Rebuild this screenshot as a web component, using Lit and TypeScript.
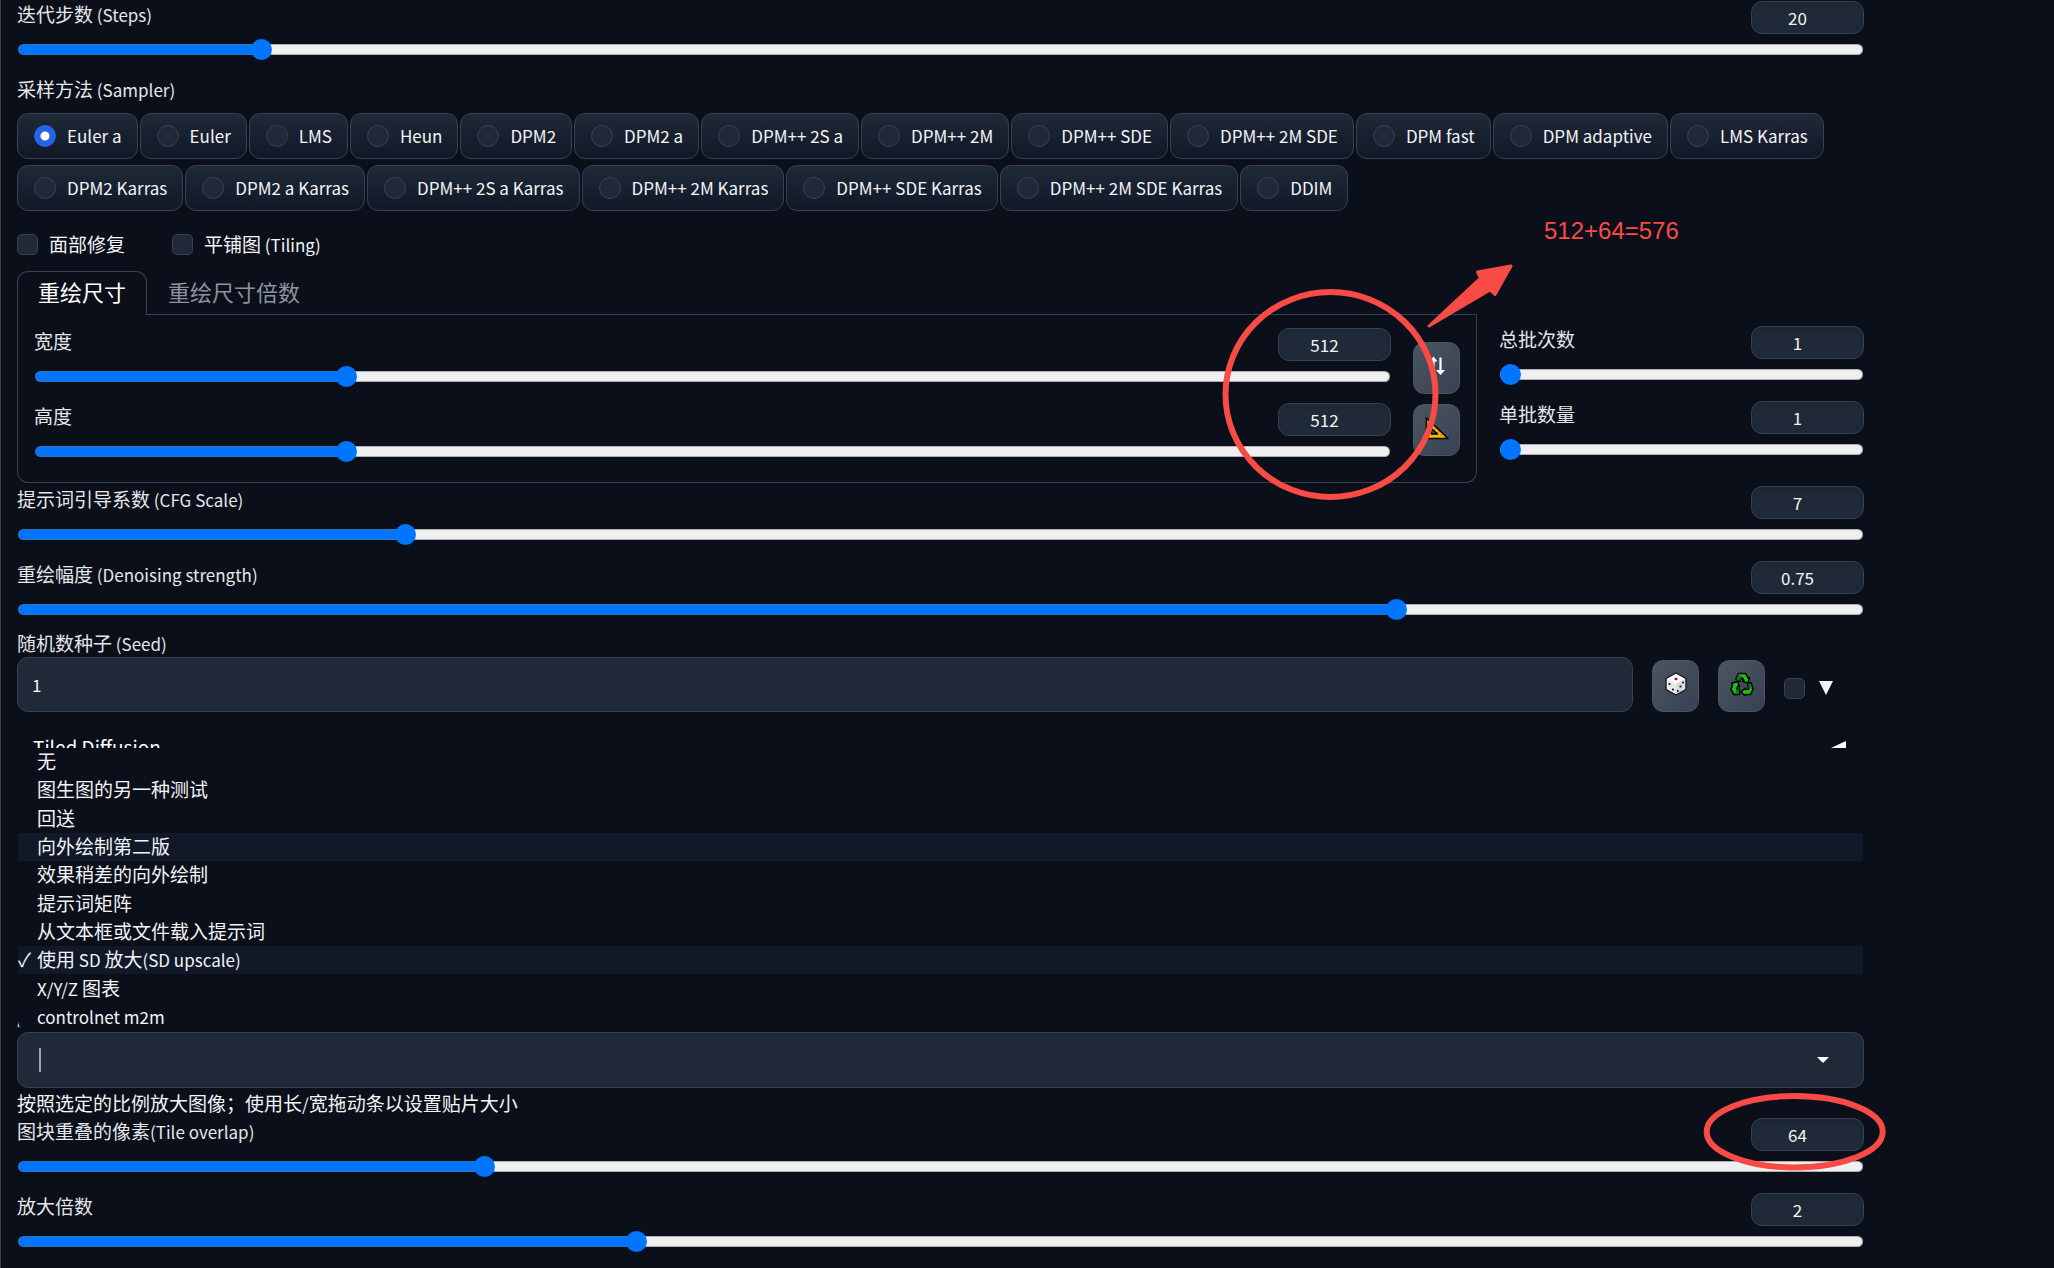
import { LitElement, html, svg, css } from "lit";
import { customElement, property, state } from "lit/decorators.js";
import { classMap } from "lit/directives/class-map.js";
import { styleMap } from "lit/directives/style-map.js";

/** Wraps Latin runs so that they can be set a little smaller than the Han text. */
const mixed = (text: string) =>
  text
    .split(/([\x20-\x7e]+)/)
    .filter(Boolean)
    .map((run) => (/^[\x20-\x7e]/.test(run) ? html`<span class="latin">${run}</span>` : run));

const shared = css`
  *,
  *::before,
  *::after {
    box-sizing: border-box;
  }
  .latin {
    font-size: 17px;
    line-height: 1;
  }
  input,
  button {
    font: inherit;
    color: inherit;
    margin: 0;
  }
`;

@customElement("range-field")
export class RangeField extends LitElement {
  @property() label = "";
  @property({ type: Number }) value = 0;
  @property({ type: Number }) min = 0;
  @property({ type: Number }) max = 100;
  @property({ type: Number }) step = 1;

  static styles = [
    shared,
    css`
      :host {
        display: block;
      }
      .head {
        display: flex;
        justify-content: space-between;
        align-items: flex-start;
        height: 33px;
      }
      .label {
        line-height: 26px;
        white-space: nowrap;
      }
      .number {
        width: 113px;
        height: 33px;
        padding: 0 20px 0 0;
        border: 1px solid #374151;
        border-radius: 11px;
        background: #1f2937;
        box-shadow: inset 0 2px 4px rgba(0, 0, 0, 0.08);
        color: #f3f4f6;
        font-size: 17px;
        text-align: center;
        appearance: textfield;
        outline: none;
      }
      .number::-webkit-inner-spin-button {
        display: none;
      }
      .range {
        display: block;
        width: calc(100% - 2px);
        height: 22px;
        margin: 4px 1px 0;
        appearance: none;
        background: none;
        outline: none;
      }
      .range::-webkit-slider-runnable-track {
        height: 11px;
        border-radius: 6px;
        box-shadow: inset 0 0 0 1px rgba(110, 110, 110, 0.5);
        background: linear-gradient(#0075ff, #0075ff) 0 0 / var(--fill) 100% no-repeat #efefef;
      }
      .range::-webkit-slider-thumb {
        appearance: none;
        width: 21px;
        height: 21px;
        margin-top: -5px;
        border-radius: 50%;
        background: #0075ff;
      }
    `,
  ];

  private onInput(e: Event) {
    this.value = Number((e.target as HTMLInputElement).value);
  }

  render() {
    const fill = ((this.value - this.min) / (this.max - this.min)) * 100;
    return html`
      <div class="head">
        <label class="label" for="number">${mixed(this.label)}</label>
        <input id="number" class="number" type="number" min=${this.min} max=${this.max} step=${this.step}
          .value=${String(this.value)} @change=${this.onInput} />
      </div>
      <input class="range" type="range" aria-label=${this.label} min=${this.min} max=${this.max} step=${this.step}
        .value=${String(this.value)} style=${styleMap({ "--fill": `${fill}%` })} @input=${this.onInput} />
    `;
  }
}

const SAMPLERS = [
  "Euler a", "Euler", "LMS", "Heun", "DPM2", "DPM2 a", "DPM++ 2S a", "DPM++ 2M", "DPM++ SDE",
  "DPM++ 2M SDE", "DPM fast", "DPM adaptive", "LMS Karras", "DPM2 Karras", "DPM2 a Karras",
  "DPM++ 2S a Karras", "DPM++ 2M Karras", "DPM++ SDE Karras", "DPM++ 2M SDE Karras", "DDIM",
];

const SCRIPTS = [
  "无", "图生图的另一种测试", "回送", "向外绘制第二版", "效果稍差的向外绘制", "提示词矩阵",
  "从文本框或文件载入提示词", "使用 SD 放大(SD upscale)", "X/Y/Z 图表", "controlnet m2m",
];

const swapIcon = html`<svg class="icon" viewBox="0 0 24 24" aria-hidden="true">
  <path d="M8.500 20.500V4.500M15.500 3.500V19.500" stroke="#fff" stroke-width="2.200" fill="none" />
  <path d="M8.500 2.500L4.500 7.500H12.500ZM15.500 21L11 16H20Z" fill="#fff" />
</svg>`;

const rulerIcon = html`<svg class="icon" viewBox="0 0 24 24" aria-hidden="true">
  <path fill-rule="evenodd" d="M1.500 2L23 22.500H1.500ZM6.500 12.500V18H12.500Z" fill="#ffb900" stroke="#000"
    stroke-width="1.600" stroke-linejoin="round" />
  <path d="M5 6.500l-1 1M8 9.500l-1 1M11 12.500l-1 1M14 15.500l-1 1M17 18.500l-1 1" stroke="#000" stroke-width=".8" />
</svg>`;

const diceIcon = html`<svg class="icon" viewBox="0 0 24 24" aria-hidden="true">
  <path d="M12 1L22 6.500V17.500L12 23L2 17.500V6.500Z" fill="#e8e8e8" />
  <path d="M12 1L22 6.500L12 12L2 6.500Z" fill="#fff" />
  <path d="M12 12L22 6.500V17.500L12 23Z" fill="#d9d9d9" />
  <path d="M12 1L22 6.500V17.500L12 23L2 17.500V6.500Z" fill="none" stroke="#111" stroke-width="1.300" stroke-linejoin="round" />
  <ellipse cx="12" cy="7" rx="1.700" ry="1.300" fill="#d0021b" />
  <g fill="#111">
    <circle cx="5.500" cy="12" r="1.100" /><circle cx="9" cy="17.500" r="1.100" />
    <circle cx="19" cy="10.500" r="1" /><circle cx="16.500" cy="14.500" r="1.100" /><circle cx="13.800" cy="19" r="1" />
  </g>
</svg>`;

const recycleIcon = html`<svg class="icon" viewBox="0 0 24 24" aria-hidden="true">
  <g stroke="#000" stroke-width="1.500" stroke-linejoin="round">
    <path d="M8.500 1.500H15.500L18 6L19.500 5.500L18 11L12.500 9.500L14 8.500L12 5.500L9.500 9.500L5.800 7Z" fill="#16c60c" />
    <path d="M2 11L7.500 9.500L9.500 14.500L8 14L6.500 17L9.500 17.500V22.500H4L1 17.500L2.500 13Z" fill="#16c60c" />
    <path d="M17.500 12L21 10.500L23 17L20.500 22.500H15.500V24L11 20L15.500 16V17.500L19 17Z" fill="#16c60c" />
  </g>
  <path d="M8.700 2.200L11.800 5L9.400 9L6.500 7ZM6.500 17.300H9V22H5ZM18 12.300L20.500 11.200L22 16.500L19.500 16.700Z" fill="#0b7a12" />
</svg>`;

@customElement("app-root")
export class AppRoot extends LitElement {
  @state() private sampler = "Euler a";
  @state() private script = "使用 SD 放大(SD upscale)";
  @state() private active = "向外绘制第二版";

  static styles = [
    shared,
    css`
      :host {
        display: block;
        position: relative;
        box-sizing: border-box;
        min-height: 100vh;
        overflow: hidden;
        padding: 1px 190px 16px 16px;
        border-left: 1px solid #374151;
        background: #0b0f19;
        color: #e5e7eb;
        font: 19px/28px "Noto Sans CJK SC", sans-serif;
      }
      .group {
        margin: 15px 0 0;
        padding: 0;
        border: 0;
      }
      .group-title {
        padding: 0;
        margin-bottom: 10px;
      }
      .radios {
        display: flex;
        flex-wrap: wrap;
        gap: 6px 2px;
      }
      .radio {
        display: flex;
        align-items: center;
        gap: 11px;
        height: 46px;
        padding: 0 15px 0 16px;
        border: 1px solid #374151;
        border-radius: 11px;
        background: linear-gradient(#1f2937, #111827);
        color: #f3f4f6;
        font-size: 17px;
        white-space: nowrap;
      }
      .radio-dot {
        appearance: none;
        width: 22px;
        height: 22px;
        border: 1px solid #374151;
        border-radius: 50%;
        background: #1f2937;
      }
      .radio-dot:checked {
        border-color: #2563eb;
        background: radial-gradient(circle, #fff 4px, #2563eb 5px);
      }
      .checks {
        display: flex;
        gap: 47px;
        margin: 19px 0 13px;
      }
      .check {
        display: flex;
        align-items: center;
        gap: 11px;
        color: #f3f4f6;
      }
      .box {
        appearance: none;
        width: 21px;
        height: 21px;
        border: 1px solid #374151;
        border-radius: 5px;
        background: #1f2937;
      }
      .size-row {
        display: grid;
        grid-template-columns: 4fr 1fr;
        gap: 22px;
        margin-bottom: 3px;
      }
      .tabs {
        display: flex;
        border-bottom: 1px solid #374151;
        height: 44px;
      }
      .tab {
        height: 44px;
        padding: 0 20px 6px;
        border: 1px solid transparent;
        border-bottom: 0;
        border-radius: 11px 11px 0 0;
        background: none;
        color: #8b93a1;
        font-size: 22px;
      }
      .tab.selected {
        border-color: #374151;
        background: #0b0f19;
        color: #fff;
      }
      .panel {
        display: flex;
        gap: 22px;
        padding: 13px 16px 20px;
        border: 1px solid #374151;
        border-top: 0;
        border-radius: 0 0 11px 11px;
      }
      .stack {
        display: flex;
        flex-direction: column;
        gap: 16px;
        flex: 1;
        min-width: 0;
      }
      .batch {
        padding-top: 55px;
      }
      .tools {
        display: flex;
        flex-direction: column;
        gap: 10px;
        padding-top: 14px;
      }
      .tool {
        display: grid;
        place-items: center;
        width: 47px;
        height: 52px;
        padding: 0 0 4px;
        border: 1px solid #4b5563;
        border-radius: 11px;
        background: linear-gradient(to bottom right, #4b5563, #374151);
      }
      .icon {
        width: 24px;
        height: 24px;
      }
      .seed {
        display: flex;
        align-items: flex-end;
        gap: 19px;
        margin-top: 9px;
      }
      .seed-field {
        display: flex;
        flex-direction: column;
        flex: 1;
      }
      .seed-input {
        height: 55px;
        padding: 0 14px;
        border: 1px solid #374151;
        border-radius: 11px;
        background: #1f2937;
        color: #f3f4f6;
        font-size: 17px;
        outline: none;
      }
      .extra {
        display: flex;
        align-items: center;
        gap: 14px;
        width: 80px;
        height: 48px;
      }
      .down {
        width: 14px;
        height: 14px;
      }
      .extensions {
        height: 292px;
        padding-top: 7px;
      }
      .accordion {
        display: flex;
        align-items: center;
        justify-content: space-between;
        width: 100%;
        height: 56px;
        padding: 0 17px 0 16px;
        border: 0;
        background: none;
        color: #fff;
      }
      .left {
        width: 17px;
        height: 17px;
      }
      .script-label {
        display: block;
      }
      .combo {
        position: relative;
        display: flex;
        align-items: center;
        height: 56px;
        padding: 0 34px 0 21px;
        border: 1px solid #374151;
        border-radius: 11px;
        background: #1f2937;
      }
      .caret {
        width: 2px;
        height: 24px;
        background: #9ca3af;
      }
      .combo-input {
        flex: 1;
        border: 0;
        background: none;
        outline: none;
      }
      .arrow {
        width: 12px;
        height: 6px;
      }
      .options {
        position: absolute;
        left: 0;
        right: 0;
        bottom: 100%;
        display: flex;
        flex-direction: column;
        height: 283px;
        margin: 0 0 2px;
        padding: 0;
        border-radius: 0 0 11px 11px;
        background: #0b0f19;
        color: #f3f4f6;
        overflow: hidden;
        list-style: none;
      }
      .option {
        display: flex;
        align-items: center;
        flex: 1;
        line-height: 26px;
        padding-bottom: 2px;
      }
      .option.lit {
        background: #111827;
      }
      .tick {
        width: 19px;
      }
      .hint {
        margin: 0;
        line-height: 30px;
        color: #f3f4f6;
      }
      .notes {
        position: absolute;
        top: 0;
        left: 0;
        width: 2054px;
        height: 1268px;
        pointer-events: none;
      }
      .note-text {
        font: 24px "Liberation Sans", Arial, sans-serif;
      }
    `,
  ];

  render() {
    return html`
      <range-field label="迭代步数 (Steps)" .value=${20} .min=${1} .max=${150}></range-field>

      <fieldset class="group">
        <legend class="group-title">${mixed("采样方法 (Sampler)")}</legend>
        <div class="radios">
          ${SAMPLERS.map(
            (name) => html`<label class="radio">
              <input class="radio-dot" type="radio" name="sampler" .checked=${name === this.sampler}
                @change=${() => (this.sampler = name)} />${name}</label>`,
          )}
        </div>
      </fieldset>

      <div class="checks">
        <label class="check"><input class="box" type="checkbox" />面部修复</label>
        <label class="check"><input class="box" type="checkbox" /><span>${mixed("平铺图 (Tiling)")}</span></label>
      </div>

      <div class="size-row">
        <div>
          <div class="tabs" role="tablist">
            <button class="tab selected" role="tab" aria-selected="true">重绘尺寸</button>
            <button class="tab" role="tab" aria-selected="false">重绘尺寸倍数</button>
          </div>
          <div class="panel" role="tabpanel">
            <div class="stack">
              <range-field label="宽度" .value=${512} .min=${64} .max=${2048} .step=${8}></range-field>
              <range-field label="高度" .value=${512} .min=${64} .max=${2048} .step=${8}></range-field>
            </div>
            <div class="tools">
              <button class="tool" aria-label="⇅">${swapIcon}</button>
              <button class="tool" aria-label="📐">${rulerIcon}</button>
            </div>
          </div>
        </div>
        <div class="stack batch">
          <range-field label="总批次数" .value=${1} .min=${1} .max=${100}></range-field>
          <range-field label="单批数量" .value=${1} .min=${1} .max=${8}></range-field>
        </div>
      </div>

      <div class="stack">
        <range-field label="提示词引导系数 (CFG Scale)" .value=${7} .min=${1} .max=${30} .step=${0.5}></range-field>
        <range-field label="重绘幅度 (Denoising strength)" .value=${0.75} .min=${0} .max=${1} .step=${0.01}></range-field>
      </div>

      <div class="seed">
        <div class="seed-field">
          <label for="seed">${mixed("随机数种子 (Seed)")}</label>
          <input id="seed" class="seed-input" type="text" inputmode="numeric" value="1" />
        </div>
        <button class="tool" aria-label="🎲">${diceIcon}</button>
        <button class="tool" aria-label="♻">${recycleIcon}</button>
        <label class="extra">
          <input class="box" type="checkbox" aria-label="▼" />
          <svg class="down" viewBox="0 0 14 14" aria-hidden="true"><path d="M0 0H14L7 14Z" fill="#f3f4f6" /></svg>
        </label>
      </div>

      <div class="extensions">
        <button class="accordion">
          <span>Tiled Diffusion</span>
          <svg class="left" viewBox="0 0 17 17" aria-hidden="true"><path d="M1 9L16 2V16Z" fill="#fff" /></svg>
        </button>
      </div>

      <label class="script-label" for="script">脚本</label>
      <div class="combo">
        <span class="caret"></span>
        <input id="script" class="combo-input" type="text" role="combobox" aria-expanded="true" aria-controls="scripts" />
        <svg class="arrow" viewBox="0 0 12 6" aria-hidden="true"><path d="M0 0H12L6 6Z" fill="#fff" /></svg>
        <ul id="scripts" class="options" role="listbox">
          ${SCRIPTS.map((name) => {
            const chosen = name === this.script;
            return html`<li class=${classMap({ option: true, lit: chosen || name === this.active })} role="option"
              aria-selected=${chosen} @mouseenter=${() => (this.active = name)} @click=${() => (this.script = name)}>
              <span class="tick">${chosen ? "✓" : ""}</span><span>${mixed(name)}</span>
            </li>`;
          })}
        </ul>
      </div>
      <p class="hint">${mixed("按照选定的比例放大图像；使用长/宽拖动条以设置贴片大小")}</p>

      <div class="stack">
        <range-field label="图块重叠的像素(Tile overlap)" .value=${64} .min=${0} .max=${256} .step=${16}></range-field>
        <range-field label="放大倍数" .value=${2} .min=${1} .max=${4} .step=${0.05}></range-field>
      </div>

      <svg class="notes" viewBox="1 0 2054 1268">
        ${svg`
          <g fill="none" stroke="#f84b45" stroke-width="6">
            <ellipse cx="1330.500" cy="394.500" rx="105" ry="102.500" />
            <ellipse cx="1794.700" cy="1131.700" rx="88" ry="35.700" />
          </g>
          <path d="M1429 326L1480.500 278L1477.500 272L1511 266L1495 294.500L1490 290Z" fill="#f84b45"
            stroke="#f84b45" stroke-width="3" stroke-linejoin="round" />
          <text class="note-text" x="1544" y="239" fill="#f84b45">512+64=576</text>
        `}
      </svg>
    `;
  }
}
